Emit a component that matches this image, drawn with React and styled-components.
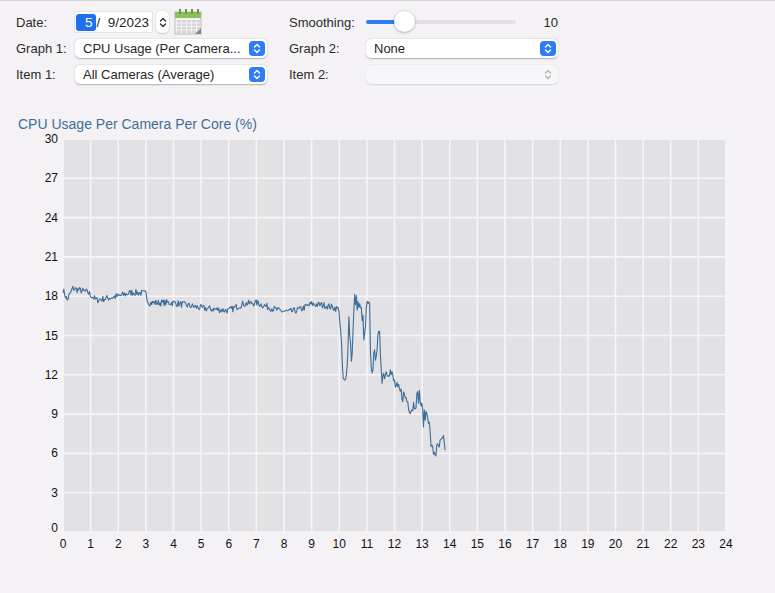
import React from "react";
import styled, { createGlobalStyle } from "styled-components";

const Global = createGlobalStyle`
  html, body { margin: 0; padding: 0; background: #f4f2f5; }
  body { font-family: "Liberation Sans", Arial, sans-serif; font-size: 13px; color: #262626; }
`;

const Page = styled.div`
  width: 775px; height: 593px; box-sizing: border-box;
  border-top: 1px solid #d8d6da;
  padding: 8px 0 0 16px;
`;
const Controls = styled.div`
  display: grid;
  grid-template-columns: 59px 192px 22px 77px 192px;
  grid-auto-rows: 26px;
  align-items: center;
  column-gap: 0;
`;
const Label = styled.span` font-size: 13px; color: #2b2b2b; `;
const Spacer = styled.span``;
const DateRow = styled.div` display: flex; align-items: center; gap: 4px; `;
const DateField = styled.div`
  width: 76px; height: 20px; background: #fff; display: flex; align-items: center;
  font-size: 13.5px; padding-left: 1px; box-shadow: 0 0 0 0.5px #d3d3d3;
`;
const Sel = styled.span` background: #1f6ff0; color: #fff; padding: 1px 3px 1px 9px; border-radius: 3px; margin-right: 1px; `;
const Stepper = styled.div`
  width: 13px; height: 22px; border-radius: 5px; background: #fff; box-shadow: 0 0.5px 1.5px rgba(0,0,0,.3);
  display: flex; align-items: center; justify-content: center;
`;
const Popup = styled.div`
  height: 19px; width: ${p => p.$w || 192}px; box-sizing: border-box;
  background: ${p => p.$disabled ? "#f7f6f8" : "#fff"};
  border-radius: 5px;
  box-shadow: 0 0.5px 1.5px rgba(0,0,0,${p => p.$disabled ? 0.12 : 0.28});
  display: flex; align-items: center; justify-content: space-between;
  padding: 0 2px 0 8px; font-size: 13px;
`;
const Arrows = styled.span`
  width: 16px; height: 15px; border-radius: 4px;
  background: ${p => p.$disabled ? "transparent" : "#2f7cf6"};
  display: flex; align-items: center; justify-content: center;
`;
const SliderRow = styled.div` display: flex; align-items: center; gap: 28px; `;
const Track = styled.div`
  position: relative; width: 166px; height: 4px; border-radius: 2px; background: #e2e0e4;
`;
const Fill = styled.div` position: absolute; left: 0; top: 0; height: 4px; border-radius: 2px; background: #2f7cf6; `;
const Knob = styled.div`
  position: absolute; top: -9px; width: 21px; height: 21px; border-radius: 50%;
  background: #fff; box-shadow: 0 0.5px 2.5px rgba(0,0,0,.35);
`;
const Title = styled.div` margin: 29px 0 0 2px; color: #3e6f98; font-size: 14px; `;
const ChartSvg = styled.svg` display: block; margin-left: -16px; `;

const ArrowIcon = ({ color }) => (
  <svg width="8" height="11" viewBox="0 0 8 11">
    <path d="M1.5 4 L4 1.5 L6.5 4 M1.5 7 L4 9.5 L6.5 7" fill="none" stroke={color} strokeWidth="1.4" strokeLinecap="round" strokeLinejoin="round" />
  </svg>
);

const CalIcon = () => (
  <svg width="30" height="30" viewBox="0 0 30 30">
    <rect x="2" y="5" width="26" height="22" fill="#f4f4f4" stroke="#bbb" />
    <rect x="2" y="5" width="26" height="6" fill="#8cc05a" />
    {[7, 13, 19, 25].map(x => <rect key={x} x={x - 1} y="2" width="2" height="5" fill="#6a9a3e" />)}
    {[0, 1, 2, 3].map(r => [0, 1, 2, 3, 4].map(c => (
      <rect key={r + "-" + c} x={4 + c * 5} y={13 + r * 3.5} width="4" height="2.5" fill="#d6d6d6" />
    )))}
    <path d="M22 27 L28 21 L28 27 Z" fill="#888" />
  </svg>
);

// chart data
const keys = [
  [0, 18.5], [0.15, 17.7], [0.35, 18.6], [0.9, 18.3], [1.2, 17.7], [2, 18.0], [2.5, 18.3], [3, 18.2], [3.1, 17.5],
  [4, 17.5], [5, 17.1], [6, 16.9], [6.5, 17.4], [7, 17.5], [7.8, 16.9], [8.2, 16.8], [8.6, 17.0], [9, 17.4], [9.5, 17.3],
  [10, 17.0], [10.15, 11.3], [10.25, 11.4], [10.35, 16.3], [10.45, 13.0], [10.55, 17.8], [10.7, 17.3], [10.85, 16.5],
  [10.9, 14.2], [11.0, 17.3], [11.1, 17.0], [11.15, 12.2], [11.35, 14.0], [11.45, 15.1], [11.55, 11.9], [11.8, 12.5],
  [12.1, 10.8], [12.4, 10.3], [12.6, 9.4], [12.9, 10.5], [13.05, 8.6], [13.2, 9.3], [13.35, 6.2], [13.5, 6.1],
  [13.75, 6.9], [13.85, 6.4]
];
function baseAt(t) {
  for (let i = 0; i < keys.length - 1; i++) {
    const [a, va] = keys[i], [b, vb] = keys[i + 1];
    if (t >= a && t <= b) return va + (vb - va) * (t - a) / (b - a);
  }
  return keys[keys.length - 1][1];
}
let seed = 7;
const rnd = () => { seed = (seed * 16807) % 2147483647; return seed / 2147483647; };
const pts = [];
for (let t = 0; t <= 13.85; t += 0.03) {
  const amp = t > 10 ? 0.6 : 0.25;
  pts.push([t, baseAt(t) + (rnd() - 0.5) * 2 * amp]);
}

const X0 = 63, X1 = 726, Y0 = 7, Y1 = 400; // within svg
const sx = h => X0 + (h / 24) * (X1 - X0);
const sy = v => Y1 - (v / 30) * (Y1 - Y0);

function Chart() {
  const path = pts.map((p, i) => (i ? "L" : "M") + sx(p[0]).toFixed(1) + " " + sy(p[1]).toFixed(1)).join(" ");
  return (
    <ChartSvg width="775" height="430" viewBox="0 0 775 430">
      <rect x={X0} y={Y0} width={X1 - X0} height={Y1 - Y0} fill="#e2e1e3" />
      {Array.from({ length: 25 }, (_, h) => (
        <line key={"v" + h} x1={sx(h)} x2={sx(h)} y1={Y0} y2={Y1} stroke="#f7f5f8" strokeWidth="1.6" />
      ))}
      {Array.from({ length: 11 }, (_, i) => (
        <line key={"h" + i} x1={X0} x2={X1} y1={sy(i * 3)} y2={sy(i * 3)} stroke="#f7f5f8" strokeWidth="1.6" />
      ))}
      <path d={path} fill="none" stroke="#3c6d98" strokeWidth="1.1" strokeLinejoin="round" />
      {Array.from({ length: 11 }, (_, i) => (
        <text key={"yl" + i} x={58} y={sy(i * 3) + 4 - (i === 0 ? 4 : 0)} textAnchor="end" fontSize="12" fill="#111" fontFamily="Liberation Sans, Arial, sans-serif">{i * 3}</text>
      ))}
      {Array.from({ length: 25 }, (_, h) => (
        <text key={"xl" + h} x={sx(h)} y={Y1 + 16} textAnchor="middle" fontSize="12" fill="#111" fontFamily="Liberation Sans, Arial, sans-serif">{h}</text>
      ))}
    </ChartSvg>
  );
}

export default function App() {
  return (
    <>
      <Global />
      <Page>
        <Controls>
          <Label>Date:</Label>
          <DateRow>
            <DateField><Sel>5</Sel>/&nbsp;&nbsp;9/2023</DateField>
            <Stepper><ArrowIcon color="#333" /></Stepper>
            <CalIcon />
          </DateRow>
          <Spacer />
          <Label>Smoothing:</Label>
          <SliderRow>
            <Track>
              <Fill style={{ width: 32 }} />
              <Knob style={{ left: 28 }} />
            </Track>
            <Label>10</Label>
          </SliderRow>

          <Label>Graph 1:</Label>
          <Popup>CPU Usage (Per Camera...<Arrows><ArrowIcon color="#fff" /></Arrows></Popup>
          <Spacer />
          <Label>Graph 2:</Label>
          <Popup>None<Arrows><ArrowIcon color="#fff" /></Arrows></Popup>

          <Label>Item 1:</Label>
          <Popup>All Cameras (Average)<Arrows><ArrowIcon color="#fff" /></Arrows></Popup>
          <Spacer />
          <Label>Item 2:</Label>
          <Popup $disabled><span /><Arrows $disabled><ArrowIcon color="#b5b5b5" /></Arrows></Popup>
        </Controls>
        <Title>CPU Usage Per Camera Per Core (%)</Title>
        <Chart />
      </Page>
    </>
  );
}
